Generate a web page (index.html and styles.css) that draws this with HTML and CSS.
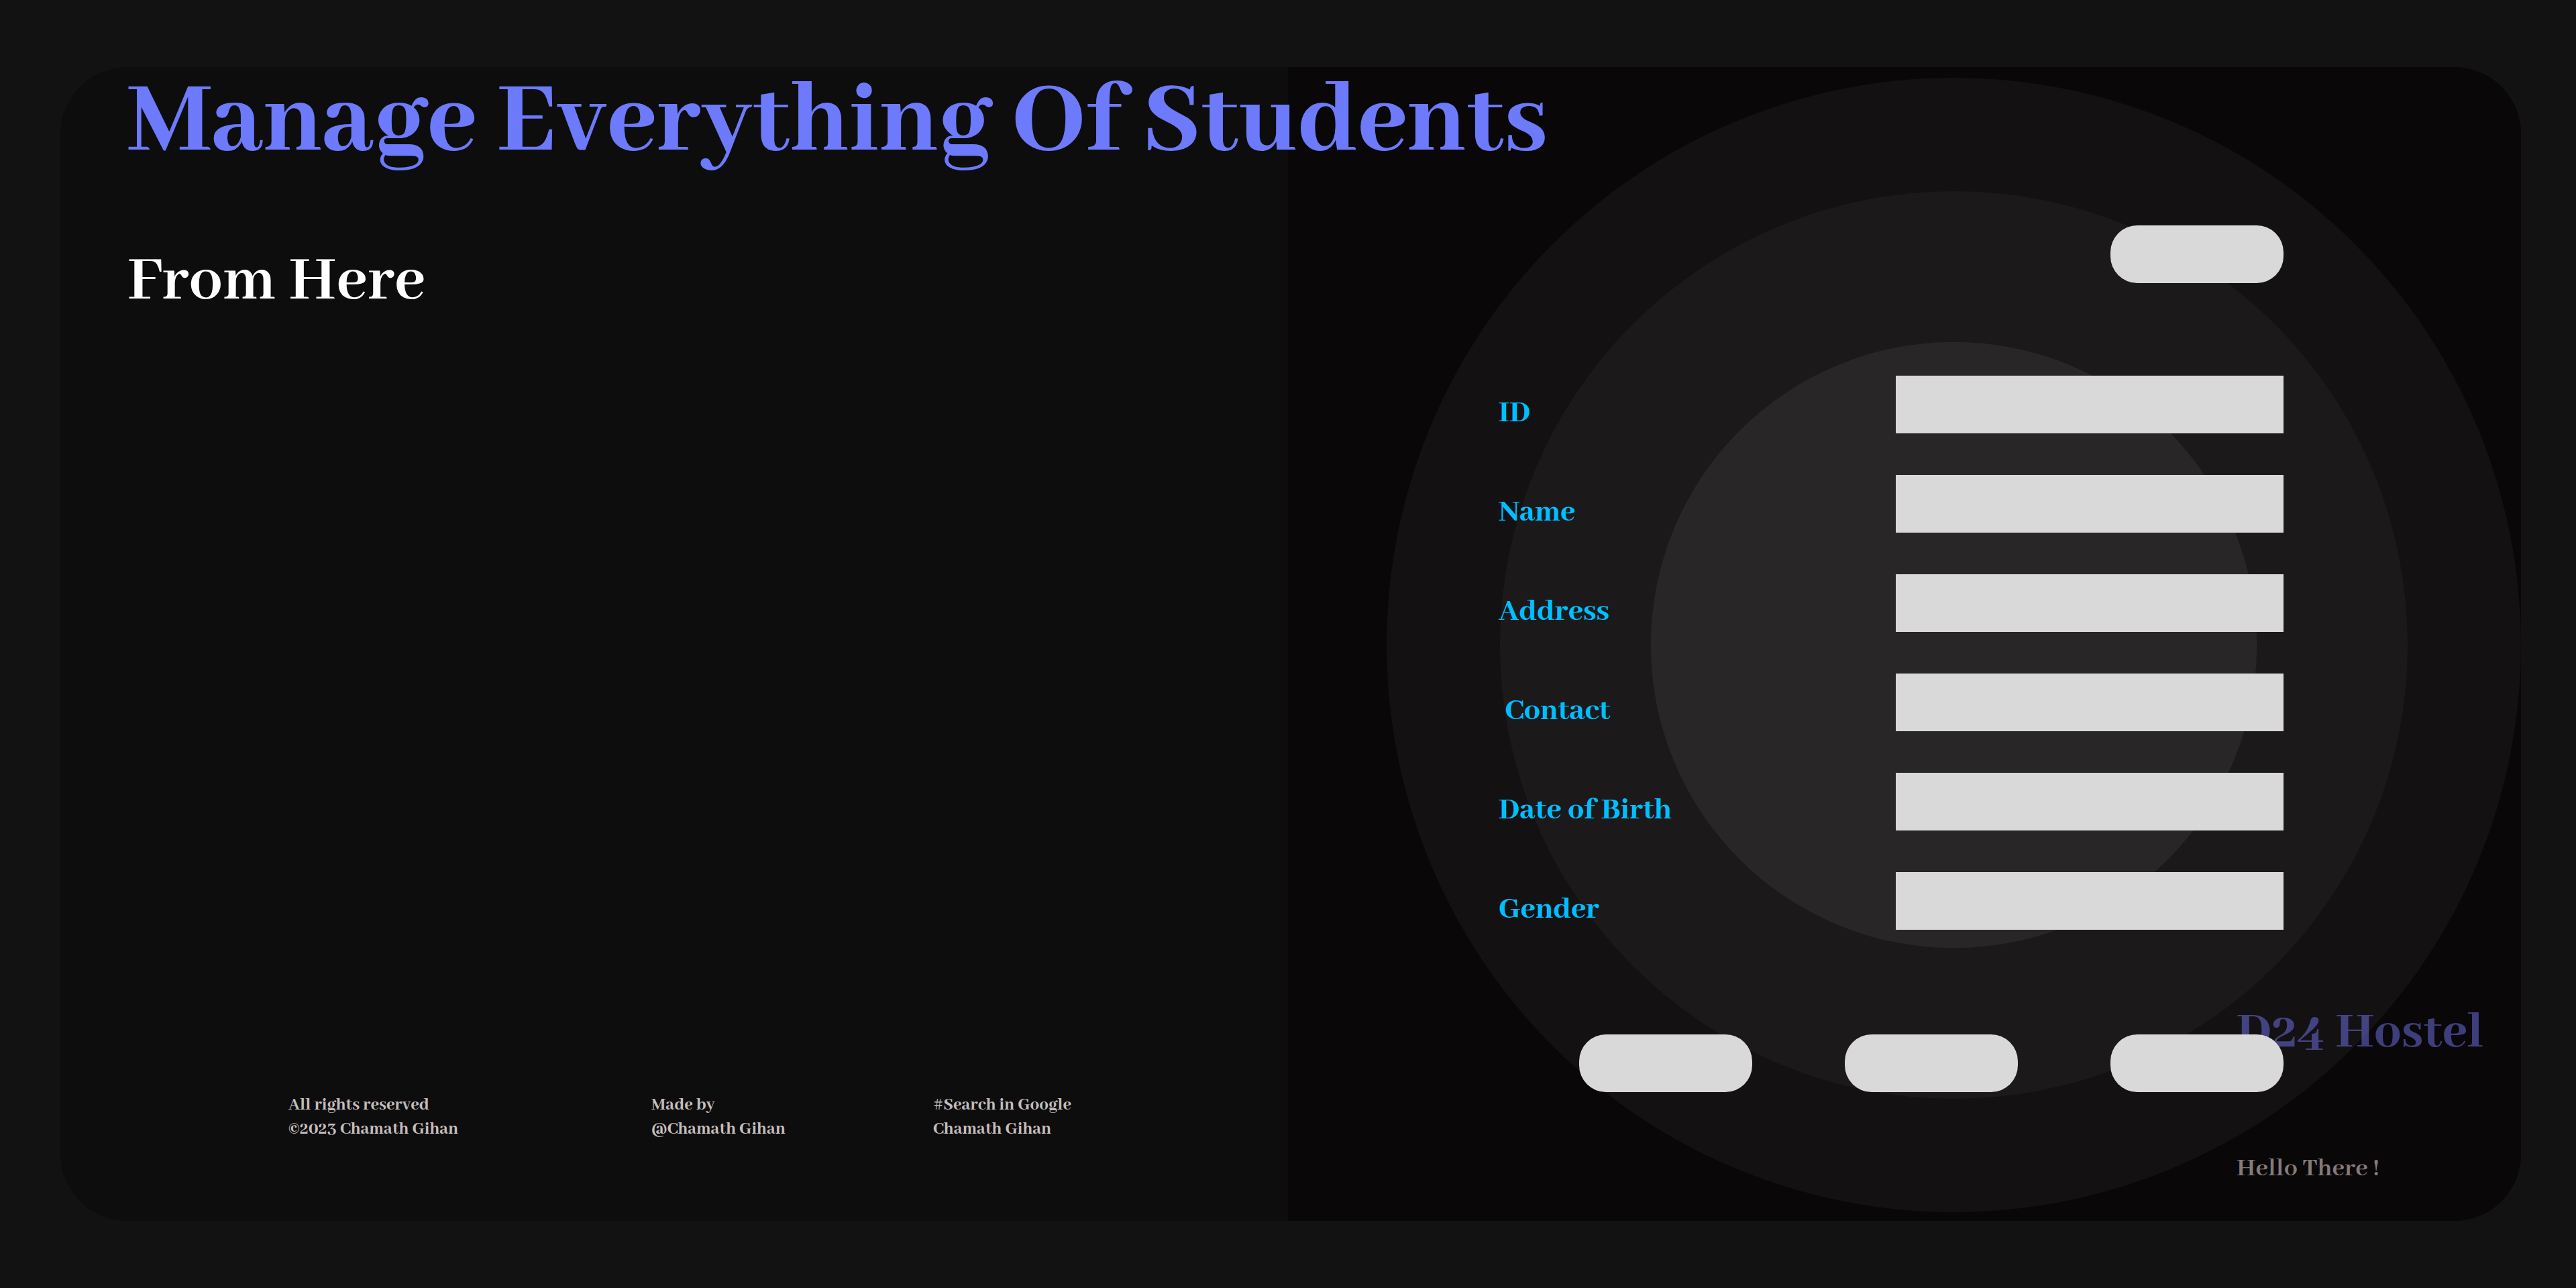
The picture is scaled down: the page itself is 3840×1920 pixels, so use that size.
FILE: index.html
```
<!DOCTYPE html>
<html lang="en">
<head>
  <meta charset="utf-8">
  <meta name="viewport" content="width=device-width, initial-scale=1">
  <title>D24 Hostel – Manage Students</title>
  <link rel="stylesheet" href="styles.css">
</head>
<body>
  <main class="panel">
    <section class="intro">
      <h1 class="title">Manage Everything Of Students</h1>
      <p class="subtitle">From Here</p>
      <footer class="credits">
        <p>All rights reserved<br>©2023 Chamath Gihan</p>
        <p>Made by<br>@Chamath Gihan</p>
        <p>#Search in Google<br>Chamath Gihan</p>
      </footer>
    </section>

    <section class="workspace">
      <svg class="rings" viewBox="0 0 1692 1692" aria-hidden="true">
        <circle class="ring-outer" cx="846" cy="846" r="846"/>
        <circle class="ring-middle" cx="846" cy="846" r="677"/>
        <circle class="ring-inner" cx="846" cy="846" r="452"/>
      </svg>

      <div class="brand">
        <p class="brand-name">D24 Hostel</p>
        <p class="greeting">Hello There !</p>
      </div>

      <form class="student-form">
        <button class="pill" type="button" aria-label="Search"></button>
        <div class="fields">
          <div class="field"><label for="id">ID</label><input id="id" type="text"></div>
          <div class="field"><label for="name">Name</label><input id="name" type="text"></div>
          <div class="field"><label for="address">Address</label><input id="address" type="text"></div>
          <div class="field"><label for="contact">&nbsp;Contact</label><input id="contact" type="text"></div>
          <div class="field"><label for="birth">Date of Birth</label><input id="birth" type="text"></div>
          <div class="field"><label for="gender">Gender</label><input id="gender" type="text"></div>
        </div>
        <div class="actions">
          <button class="pill" type="button" aria-label="Add"></button>
          <button class="pill" type="button" aria-label="Update"></button>
          <button class="pill" type="button" aria-label="Delete"></button>
        </div>
      </form>
    </section>
  </main>
</body>
</html>
```
FILE: styles.css
```
* {
  box-sizing: border-box;
}

body {
  margin: 0;
  min-height: 100vh;
  display: flex;
  padding: 100px 82px 100px 90px;
  background: #121212;
  font-family: "Abhaya Libre", "Liberation Serif", serif;
  font-weight: 700;
}

h1,
p {
  margin: 0;
}

.panel {
  flex: 1;
  display: grid;
  grid-template-columns: calc(50vw - 90px) 1fr;
  border-radius: 100px;
  background: #0d0d0d;
}

/* Left half: the title runs on over the right half */
.intro {
  position: relative;
  z-index: 1;
  min-width: 0;
  display: flex;
  flex-direction: column;
  padding: 0 0 119px 100px;
}

.title {
  color: #6c7afb;
  font-size: 160px;
  font-weight: 800;
  line-height: 166px;
  white-space: nowrap;
}

.subtitle {
  margin-top: 104px;
  color: #fff;
  font-size: 100px;
  line-height: 100px;
}

.credits {
  margin-top: auto;
  padding-left: 240px;
  display: grid;
  grid-template-columns: 541px 420px auto;
  color: #c4bcbc;
  font-size: 27px;
  font-weight: 800;
  line-height: 36px;
}

/* Right half */
.workspace {
  position: relative;
  padding: 236px 354px 192px 314px;
  border-radius: 0 100px 100px 0;
  background: #090708;
}

.rings {
  position: absolute;
  top: 16px;
  right: 0;
  width: 92%;
}

.ring-outer {
  fill: #131112;
}

.ring-middle {
  fill: #1b191a;
}

.ring-inner {
  fill: #282627;
}

.brand {
  position: absolute;
  right: 0;
  bottom: 58px;
  width: 424px;
}

.brand-name {
  color: rgba(115, 117, 240, 0.5);
  font-size: 80px;
  font-weight: 800;
  line-height: 80px;
}

.greeting {
  margin-top: 142px;
  color: #857a7a;
  font-size: 40px;
  line-height: 40px;
}

.student-form {
  position: relative;
  display: flex;
  flex-direction: column;
  align-items: flex-end;
}

.pill {
  width: 258px;
  height: 86px;
  padding: 0;
  border: 0;
  border-radius: 40px;
  background: #d9d9d9;
  cursor: pointer;
}

.fields {
  width: 100%;
  margin-top: 138px;
  display: grid;
  gap: 62px;
}

.field {
  display: flex;
  justify-content: space-between;
}

.field label {
  padding-top: 26px;
  color: #00bfff;
  font-size: 48px;
  font-weight: 800;
  line-height: 60px;
}

.field input {
  width: 578px;
  height: 86px;
  padding: 0 24px;
  border: 0;
  border-radius: 0;
  background: #d9d9d9;
  color: #0d0d0d;
  font: inherit;
  font-size: 40px;
}

.actions {
  margin-top: 156px;
  display: flex;
  gap: 138px;
}
```
